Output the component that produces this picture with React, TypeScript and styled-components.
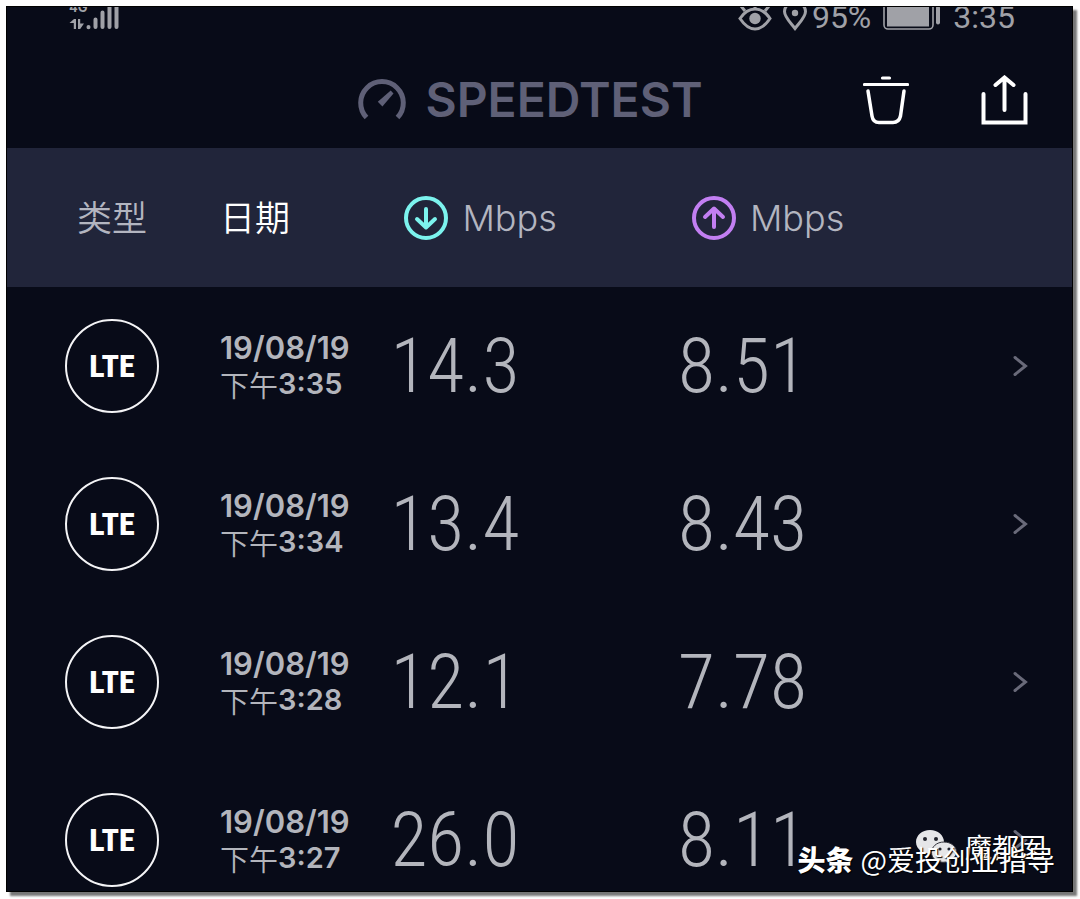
import React from 'react';
import styled, { createGlobalStyle } from 'styled-components';

const SANS = 'Inter, "Noto Sans CJK SC", sans-serif';

const GlobalStyle = createGlobalStyle`
  * { box-sizing: border-box; }
  body { margin: 0; background: #fefefe; font-family: ${SANS}; }
`;

const Screen = styled.main`
  position: relative;
  margin: 6px 7px 7px 6px;
  border: 1px solid #000;
  background: #080b18;
  box-shadow: 4px 4px 2px #777;
  color: #b3b5bc;
  overflow: hidden;
`;

const StatusBar = styled.div`
  display: flex;
  align-items: flex-end;
  justify-content: space-between;
  height: 26px;
  padding: 0 57px 0 62px;
  overflow: hidden;
  color: #a0a1a7;
  font: 400 32px/32px Roboto, sans-serif;
`;

const StatusGroup = styled.div<{ $gap: number }>`
  display: flex;
  align-items: flex-end;
  gap: ${(p) => p.$gap}px;
`;

const Network = styled.div`
  display: grid;
  padding-bottom: 2px;
  font: 700 13px/16px Inter, sans-serif;

  > * { grid-area: 1 / 1; }
  svg { display: block; }
`;

const StatusIcon = styled.svg`
  display: block;
  margin-bottom: 2px;
`;

const Header = styled.header`
  display: grid;
  grid-template-columns: 1fr auto 1fr;
  align-items: center;
  padding: 41px 44px 22px 26px;
`;

const Brand = styled.h1`
  grid-column: 2;
  display: flex;
  align-items: center;
  gap: 19px;
  margin: 0;
  color: #5f6077;
  font: 600 48px/52px Inter, sans-serif;

  svg { display: block; }
`;

const Actions = styled.div`
  display: flex;
  justify-content: flex-end;
  gap: 72px;
`;

const IconButton = styled.button`
  display: block;
  padding: 0;
  border: 0;
  background: none;
  color: #fff;
  cursor: pointer;

  svg { display: block; }
`;

const Results = styled.table`
  width: 100%;
  table-layout: fixed;
  border-collapse: collapse;
  text-align: left;
`;

const HeadRow = styled.tr`
  height: 139px;
  background: #21253a;
`;

const HeadCell = styled.th<{ $width?: string; $indent: number; $active?: boolean }>`
  width: ${(p) => p.$width ?? 'auto'};
  padding: 0 0 0 ${(p) => p.$indent}px;
  color: ${(p) => (p.$active ? '#fff' : '#b3b5c0')};
  font: 350 35px/44px ${SANS};
  white-space: nowrap;
`;

const Unit = styled.span`
  display: flex;
  align-items: center;
  gap: 14px;
  font-size: 36px;
`;

const Row = styled.tr`
  height: 158px;

  &:last-child { height: 129px; }
  &:last-child td { padding-bottom: 4px; }
`;

const Cell = styled.td<{ $indent?: number }>`
  padding: 32px 0 32px ${(p) => p.$indent ?? 0}px;
  white-space: nowrap;
`;

const Badge = styled.span`
  display: flex;
  align-items: center;
  justify-content: center;
  width: 94px;
  height: 94px;
  border: 2px solid #f4f4f6;
  border-radius: 50%;
  color: #fff;
  font: 800 32px/32px "Roboto Condensed", Roboto, sans-serif;
`;

const When = styled.time`
  display: block;
  font: 600 29px/36px ${SANS};
`;

const Day = styled.span`
  display: block;
  font-size: 31px;
`;

const Hour = styled.span`
  display: flex;
  align-items: center;
  height: 36px;
`;

const Period = styled.span`
  font: 350 29px/36px "Noto Sans CJK SC", sans-serif;
`;

const Speed = styled.span`
  display: block;
  font: 300 76px/94px "Roboto Condensed", Roboto, sans-serif;
`;

const ActionCell = styled(Cell)`
  padding-right: 44px;

  button { margin-left: auto; color: #696a79; }
`;

const Watermark = styled.div<{ $right: number; $bottom: number; $size: number }>`
  position: absolute;
  right: ${(p) => p.$right}px;
  bottom: ${(p) => p.$bottom}px;
  display: flex;
  align-items: center;
  gap: 7px;
  color: #fff;
  font: 400 ${(p) => p.$size}px/32px "Noto Sans CJK SC", sans-serif;
  text-shadow: 1px 1px 1px #000;
  white-space: nowrap;
  pointer-events: none;

  b { font-weight: 900; }
`;

const Gauge = () => (
  <svg width="48" height="44" viewBox="0 0 48 44" fill="none" aria-hidden="true">
    <path d="M8.5 39.5A21.3 21.3 0 1 1 39.5 39.5" stroke="currentColor" strokeWidth="5" />
    <path d="M32.700 12.500 35.500 15.500 24.400 28.400 19.800 23.800Z" fill="currentColor" />
  </svg>
);

const Trash = () => (
  <svg width="46" height="50" viewBox="0 0 46 50" fill="none" stroke="currentColor" strokeWidth="3.500" aria-hidden="true">
    <path d="M19.500 3H26.500M1.500 9.500H44.500" strokeWidth="3.200" strokeLinecap="round" />
    <path d="M5 16 9 41Q10 47.500 16 47.500H30Q36 47.500 37.500 41L41 16" strokeLinecap="round" />
  </svg>
);

const Share = () => (
  <svg width="47" height="50" viewBox="0 0 47 50" fill="none" stroke="currentColor" strokeWidth="4" strokeLinecap="round" aria-hidden="true">
    <path d="M2.500 19V47.500H44.500V19" />
    <path d="M23.500 35V3M14.500 10 23.500 2.500 32.500 10" />
  </svg>
);

const Chevron = () => (
  <svg width="15" height="22" viewBox="0 0 15 22" fill="none" stroke="currentColor" strokeWidth="3" strokeLinecap="round" aria-hidden="true">
    <path d="M2 2.500 12.500 11 2 19.500" />
  </svg>
);

const Direction = ({ up = false }: { up?: boolean }) => (
  <svg width="44" height="44" viewBox="0 0 44 44" fill="none" stroke={up ? '#c27ff2' : '#7cf3ee'} strokeWidth="4" strokeLinecap="round" strokeLinejoin="round" aria-hidden="true">
    <circle cx="22" cy="22" r="20" />
    <path d={up ? 'M22 31V13M13 21 22 12.500 31 21' : 'M22 13V31M13 23 22 31.500 31 23'} />
  </svg>
);

const Signal = () => (
  <svg width="51" height="32" viewBox="0 0 51 32" fill="none" stroke="currentColor" strokeWidth="4" strokeLinecap="round" aria-hidden="true">
    <path d="M19.500 28V28.200M26.500 20.500V28M33.500 13.500V28M40.500 2V28M47.500 2V28" />
    <path d="M4.800 30V24H0.500L5 20H7V30ZM9 20H11.200V24.500H15L11.200 30H9Z" fill="currentColor" stroke="none" />
  </svg>
);

const Eye = () => (
  <StatusIcon width="34" height="28" viewBox="0 0 34 28" fill="none" stroke="currentColor" strokeWidth="3" aria-hidden="true">
    <path d="M2 15.500C7 8 12 6 17 6S27 8 32 15.500C27 23 22 26 17 26S7 23 2 15.500Z" />
    <circle cx="17" cy="15.500" r="5.700" fill="currentColor" stroke="none" />
    <path d="M7 8 3 3M27 8 31 3M17 5V0" />
  </StatusIcon>
);

const Pin = () => (
  <StatusIcon width="26" height="30" viewBox="0 0 26 30" fill="none" stroke="currentColor" strokeWidth="3" aria-hidden="true">
    <path d="M13 27.500C8 21 2.500 16 2.500 10.500A10.500 9.500 0 0 1 23.500 10.500C23.500 16 18 21 13 27.500Z" />
    <circle cx="13" cy="12" r="3.200" fill="currentColor" stroke="none" />
  </StatusIcon>
);

const Battery = () => (
  <StatusIcon width="58" height="30" viewBox="0 0 58 30" fill="none" stroke="currentColor" aria-hidden="true">
    <rect x="1" y="1" width="49" height="27" rx="4" strokeWidth="1.600" />
    <path d="M4 2H46V25.500H4Z" fill="currentColor" stroke="none" />
    <path d="M55 7V21.500" strokeWidth="4" strokeLinecap="round" />
  </StatusIcon>
);

const WeChat = () => (
  <svg width="43" height="36" viewBox="0 0 43 36" aria-hidden="true">
    <path d="M15 1C7 1 1 6.500 1 13C1 17 3 20 6 22L5 26.500 10 24C20 27 29 21 29 13C29 6.500 23 1 15 1Z" fill="#e6e6e8" />
    <path d="M29 13C21.500 13 16.500 18 16.500 23.500C16.500 30 23 34.500 31 33L36 35.500 35 31.500C39 29 41.500 26.500 41.500 23C41.500 17.500 36 13 29 13Z" fill="#e6e6e8" stroke="#33343c" />
    <g fill="#22232b">
      <circle cx="10" cy="10" r="2" />
      <circle cx="21" cy="10" r="2" />
      <circle cx="25" cy="20" r="1.600" />
      <circle cx="34" cy="20" r="1.600" />
    </g>
  </svg>
);

const tests = [
  { date: '19/08/19', time: '3:35', down: '14.3', up: '8.51' },
  { date: '19/08/19', time: '3:34', down: '13.4', up: '8.43' },
  { date: '19/08/19', time: '3:28', down: '12.1', up: '7.78' },
  { date: '19/08/19', time: '3:27', down: '26.0', up: '8.11' },
];

export default function App() {
  return (
    <>
      <GlobalStyle />
      <Screen>
        <StatusBar>
          <Network>
            <span>4G</span>
            <Signal />
          </Network>
          <StatusGroup $gap={12}>
            <StatusGroup $gap={10}>
              <Eye />
              <StatusGroup $gap={4}>
                <Pin />
                <span>95%</span>
              </StatusGroup>
            </StatusGroup>
            <Battery />
            <span>3:35</span>
          </StatusGroup>
        </StatusBar>
        <Header>
          <Brand>
            <Gauge />
            SPEEDTEST
          </Brand>
          <Actions>
            <IconButton aria-label="删除"><Trash /></IconButton>
            <IconButton aria-label="分享"><Share /></IconButton>
          </Actions>
        </Header>
        <Results>
          <thead>
            <HeadRow>
              <HeadCell $width="20%" $indent={70}>类型</HeadCell>
              <HeadCell $width="16%" $indent={0} $active>日期</HeadCell>
              <HeadCell $width="27%" $indent={14}><Unit><Direction />Mbps</Unit></HeadCell>
              <HeadCell $width="27%" $indent={14}><Unit><Direction up />Mbps</Unit></HeadCell>
              <HeadCell $indent={0} />
            </HeadRow>
          </thead>
          <tbody>
            {tests.map((test) => (
              <Row key={test.time}>
                <Cell $indent={58}><Badge>LTE</Badge></Cell>
                <Cell>
                  <When>
                    <Day>{test.date}</Day>
                    <Hour><Period>下午</Period>{test.time}</Hour>
                  </When>
                </Cell>
                <Cell><Speed>{test.down}</Speed></Cell>
                <Cell><Speed>{test.up}</Speed></Cell>
                <ActionCell>
                  <IconButton aria-label="详情"><Chevron /></IconButton>
                </ActionCell>
              </Row>
            ))}
          </tbody>
        </Results>
        <Watermark $right={26} $bottom={26} $size={27}>
          <WeChat />
          <span>魔都囡</span>
        </Watermark>
        <Watermark $right={17} $bottom={16} $size={28}>
          <b>头条</b>
          <span>@爱投创业指导</span>
        </Watermark>
      </Screen>
    </>
  );
}
